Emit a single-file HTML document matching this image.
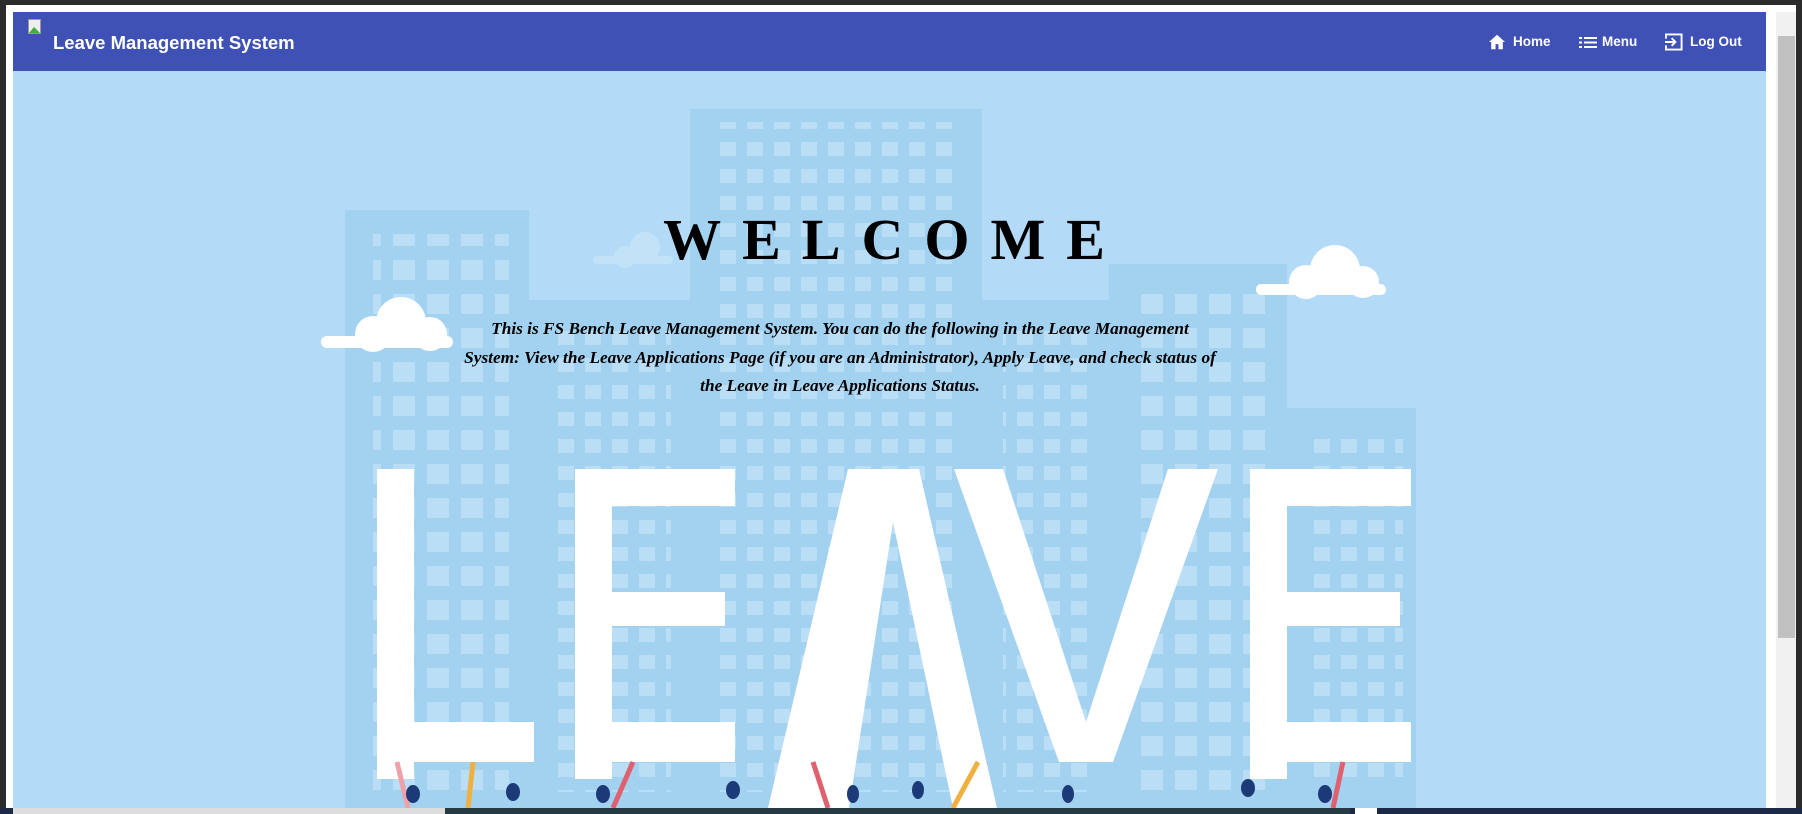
<!DOCTYPE html>
<html><head><meta charset="utf-8"><style>
*{margin:0;padding:0;box-sizing:border-box}
body{width:1802px;height:814px;overflow:hidden;background:#2b2b2b;position:relative;font-family:"Liberation Sans",sans-serif}
#win{position:absolute;left:6px;top:5px;width:1790px;height:803px;background:#fff}
#nav{position:absolute;left:13px;top:12px;width:1753px;height:59px;background:#3f51b5;color:#fff}
#main{position:absolute;left:13px;top:71px;width:1753px;height:737px;background:#b3dbf8;overflow:hidden}
#sb{position:absolute;left:1776px;top:12px;width:20px;height:796px;background:#f1f1f1}
.t{position:absolute;font-weight:bold;white-space:nowrap}
</style></head><body>
<div id="win"></div>
<div id="nav">
 <svg style="position:absolute;left:15px;top:7px" width="14" height="16"><rect x="0.5" y="0.5" width="12" height="14" fill="#eee" stroke="#999"/><path d="M1 14 L6 8 L12 14Z" fill="#4a4"/></svg>
 <div class="t" style="left:40px;top:20px;font-size:18.5px">Leave Management System</div>
 <svg style="position:absolute;left:1475px;top:22px" width="18" height="16" viewBox="0 0 24 22"><path d="M12 1 L1 11 H4 V21 H10 V14 H14 V21 H20 V11 H23Z" fill="#fff"/></svg>
 <div class="t" style="left:1500px;top:22px;font-size:13.5px">Home</div>
 <svg style="position:absolute;left:1566px;top:24px" width="18" height="13"><g fill="#fff"><rect x="0" y="1" width="3" height="2"/><rect x="0" y="5.5" width="3" height="2"/><rect x="0" y="10" width="3" height="2"/><rect x="5" y="1" width="13" height="2"/><rect x="5" y="5.5" width="13" height="2"/><rect x="5" y="10" width="13" height="2"/></g></svg>
 <div class="t" style="left:1589px;top:22px;font-size:13.5px">Menu</div>
 <svg style="position:absolute;left:1652px;top:21px" width="18" height="18" viewBox="0 0 19 19"><path d="M1 6 V1.5 H17.5 V17.5 H1 V13" fill="none" stroke="#fff" stroke-width="2"/><path d="M0 9.5 H11 M7 5.5 L11 9.5 L7 13.5" fill="none" stroke="#fff" stroke-width="2"/></svg>
 <div class="t" style="left:1677px;top:22px;font-size:13.5px">Log Out</div>
</div>
<div id="main">
<svg width="1753" height="737" style="position:absolute;left:0;top:0">
 <defs>
  <pattern id="w" x="0" y="0" width="34" height="34" patternUnits="userSpaceOnUse"><rect x="6" y="8" width="22" height="20" fill="#b9def6"/></pattern>
  <pattern id="w2" x="0" y="0" width="27" height="27" patternUnits="userSpaceOnUse"><rect x="5" y="6" width="16" height="14" fill="#b9def6"/></pattern>
 </defs>
 <g transform="translate(0,11)">
 <g fill="#a3d2f0">
  <rect x="332" y="128" width="184" height="600"/>
  <rect x="516" y="218" width="161" height="510"/>
  <rect x="677" y="27" width="292" height="700"/>
  <rect x="969" y="218" width="127" height="510"/>
  <rect x="1096" y="182" width="178" height="546"/>
  <rect x="1274" y="326" width="129" height="402"/>
 </g>
 <rect x="360" y="152" width="136" height="560" fill="url(#w)"/>
 <rect x="540" y="240" width="118" height="470" fill="url(#w2)"/>
 <rect x="705" y="40" width="240" height="670" fill="url(#w2)"/>
 <rect x="990" y="240" width="90" height="470" fill="url(#w2)"/>
 <rect x="1118" y="200" width="140" height="510" fill="url(#w)"/>
 <rect x="1290" y="345" width="100" height="360" fill="url(#w2)"/>
 <g fill="#fff">
  <circle cx="388" cy="240" r="25"/><circle cx="360" cy="252" r="18"/><circle cx="417" cy="252" r="17"/><rect x="308" y="254" width="132" height="12" rx="6"/>
  <circle cx="1322" cy="188" r="25"/><circle cx="1293" cy="200" r="17"/><circle cx="1350" cy="200" r="16"/><rect x="1243" y="202" width="130" height="11" rx="5"/>
 </g>
 <g fill="#c2e2f8"><circle cx="632" cy="165" r="15"/><circle cx="612" cy="175" r="11"/><rect x="580" y="174" width="80" height="8" rx="4"/></g>
 <g fill="#fff">
  <rect x="364" y="387" width="37" height="310"/><rect x="364" y="640" width="157" height="40"/>
  <rect x="562" y="387" width="37" height="310"/><rect x="562" y="387" width="160" height="37"/><rect x="562" y="510" width="150" height="34"/><rect x="562" y="640" width="160" height="40"/>
  <polygon points="835,387 906,387 984,726 940,726 880,440 836,726 755,726"/>
  <polygon points="941,387 990,387 1073,640 1155,387 1205,387 1100,680 1046,680"/>
  <rect x="1237" y="387" width="37" height="310"/><rect x="1237" y="387" width="161" height="37"/><rect x="1237" y="510" width="150" height="34"/><rect x="1237" y="640" width="161" height="40"/>
 </g>
 <g stroke-width="5" fill="none">
  <path d="M384 680 L395 726" stroke="#f0a0a8"/><path d="M460 680 L455 726" stroke="#f0b040"/><path d="M620 680 L600 726" stroke="#e06070"/><path d="M800 680 L815 726" stroke="#e06070"/><path d="M965 680 L940 726" stroke="#f0b040"/><path d="M1330 680 L1320 726" stroke="#e06070"/>
 </g>
 <g fill="#1c3a78"><ellipse cx="400" cy="712" rx="7" ry="9"/><ellipse cx="500" cy="710" rx="7" ry="9"/><ellipse cx="590" cy="712" rx="7" ry="9"/><ellipse cx="720" cy="708" rx="7" ry="9"/><ellipse cx="840" cy="712" rx="6" ry="9"/><ellipse cx="905" cy="708" rx="6" ry="9"/><ellipse cx="1055" cy="712" rx="6" ry="9"/><ellipse cx="1235" cy="706" rx="7" ry="9"/><ellipse cx="1312" cy="712" rx="7" ry="9"/></g>
 </g>
</svg>
 <div class="t" style="left:0;width:1753px;text-align:center;top:135px;font-family:'Liberation Serif',serif;font-size:58px;letter-spacing:21px;text-indent:10px;color:#000">WELCOME</div>
 <div style="position:absolute;left:450px;width:754px;top:244px;text-align:center;font-family:'Liberation Serif',serif;font-style:italic;font-weight:bold;font-size:17.3px;line-height:28.5px;color:#000">This is FS Bench Leave Management System. You can do the following in the Leave Management System: View the Leave Applications Page (if you are an Administrator), Apply Leave, and check status of the Leave in Leave Applications Status.</div>
</div>
<div id="sb"><div style="position:absolute;left:2px;top:24px;width:17px;height:602px;background:#c1c1c1"></div></div>
<div style="position:absolute;left:0;top:808px;width:1802px;height:6px;background:#1c2a48"></div>
<div style="position:absolute;left:13px;top:808px;width:432px;height:6px;background:#ddd"></div>
<div style="position:absolute;left:445px;top:808px;width:905px;height:6px;background:#263a44"></div>
<div style="position:absolute;left:1355px;top:808px;width:22px;height:6px;background:#fff"></div>
</body></html>
